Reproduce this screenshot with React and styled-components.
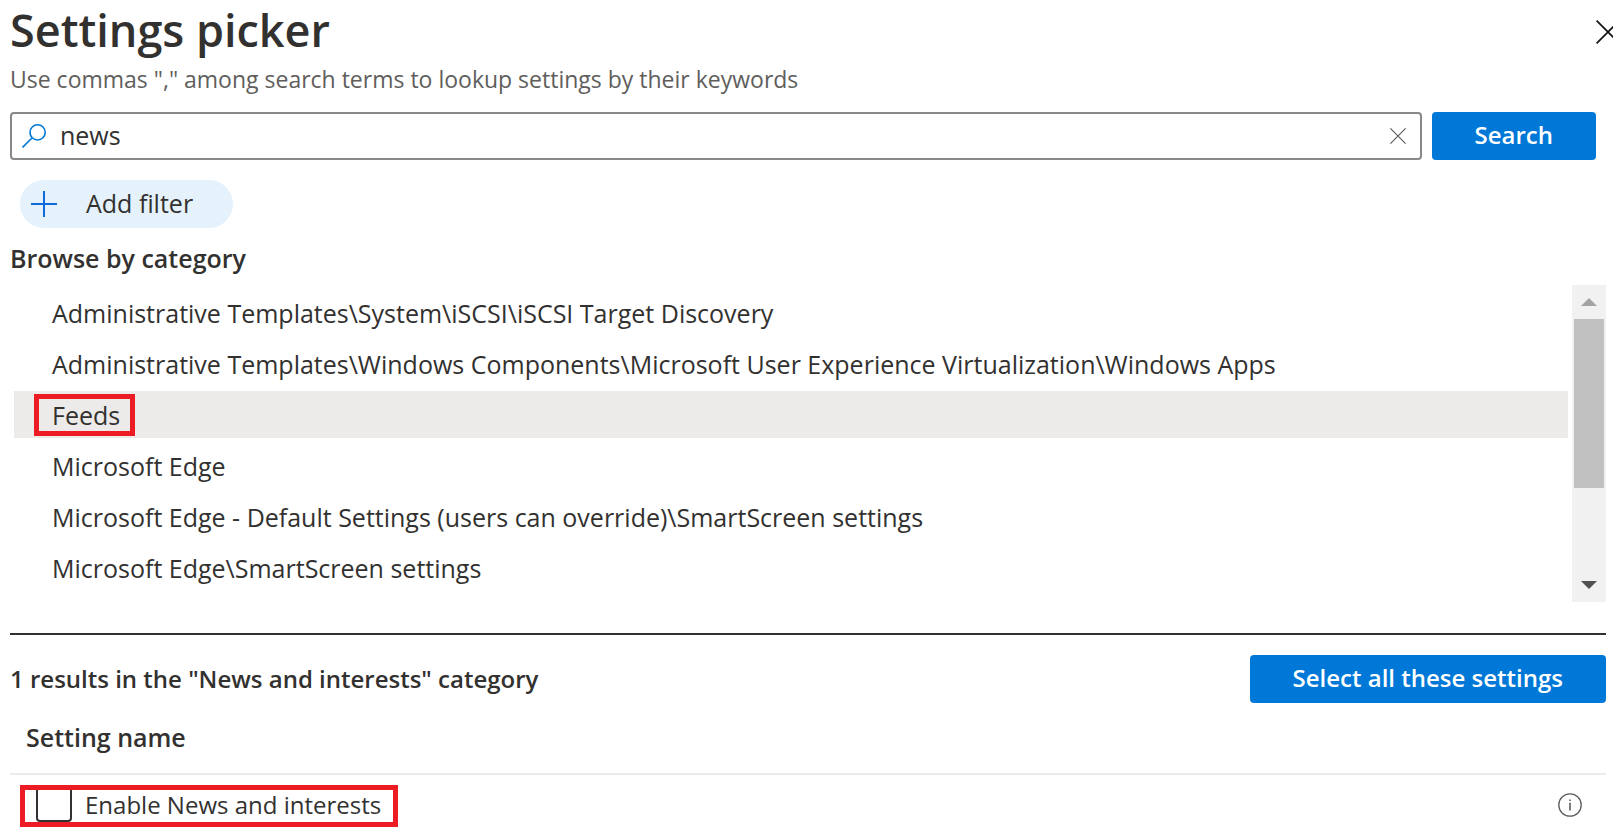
/*
 * Settings picker panel
 * Search box and filter on top, category list in the middle, matching settings below
 */
import React, { useState } from 'react';
import styled, { createGlobalStyle } from 'styled-components';

const categories = [
  'Administrative Templates\\System\\iSCSI\\iSCSI Target Discovery',
  'Administrative Templates\\Windows Components\\Microsoft User Experience Virtualization\\Windows Apps',
  'Feeds',
  'Microsoft Edge',
  'Microsoft Edge - Default Settings (users can override)\\SmartScreen settings',
  'Microsoft Edge\\SmartScreen settings',
];

const App = () => {
  const [query, setQuery] = useState('news');
  const [selected, setSelected] = useState('Feeds');
  const [enabled, setEnabled] = useState(false);

  return (
    <Page>
      <GlobalStyle />
      <Header>
        <Title>Settings picker</Title>
        <IconButton aria-label="Close">
          <svg width="24" height="24" viewBox="0 0 24 24" stroke="#111" strokeWidth="1.7">
            <path d="M0.6 0.6 23.4 23.4M23.4 0.6 0.6 23.4" />
          </svg>
        </IconButton>
      </Header>
      <Hint>Use commas "," among search terms to lookup settings by their keywords</Hint>

      <SearchForm onSubmit={(e) => e.preventDefault()}>
        <SearchBox>
          <svg width="24" height="24" viewBox="0 0 24 24" fill="none" stroke="#0078d4" strokeWidth="1.6">
            <circle cx="15.6" cy="8.4" r="7.6" />
            <path d="M10.2 13.8 0.5 23.5" />
          </svg>
          <SearchInput
            type="text"
            aria-label="Search settings"
            value={query}
            onChange={(e) => setQuery(e.target.value)}
          />
          <IconButton type="button" aria-label="Clear search" onClick={() => setQuery('')}>
            <svg width="16" height="16" viewBox="0 0 16 16" stroke="#605e5c" strokeWidth="1.2">
              <path d="M0.4 0.4 15.6 15.6M15.6 0.4 0.4 15.6" />
            </svg>
          </IconButton>
        </SearchBox>
        <PrimaryButton type="submit">Search</PrimaryButton>
      </SearchForm>

      <FilterButton type="button">
        <svg width="26" height="26" viewBox="0 0 26 26" stroke="#0f6cda" strokeWidth="2">
          <path d="M13 0V26M0 13H26" />
        </svg>
        <FilterText>Add filter</FilterText>
      </FilterButton>

      <SectionTitle>Browse by category</SectionTitle>
      <ListFrame>
        <CategoryList>
          {categories.map((name) => (
            <li key={name}>
              <CategoryButton $active={name === selected} onClick={() => setSelected(name)}>
                <CategoryLabel $marked={name === 'Feeds'}>{name}</CategoryLabel>
              </CategoryButton>
            </li>
          ))}
        </CategoryList>
        <Scrollbar>
          <ScrollArrow aria-label="Scroll up">
            <svg width="16" height="8" viewBox="0 0 16 8" fill="#a3a3a3">
              <path d="M8 0 16 8H0Z" />
            </svg>
          </ScrollArrow>
          <ScrollTrack>
            <ScrollThumb />
          </ScrollTrack>
          <ScrollArrow aria-label="Scroll down">
            <svg width="16" height="8" viewBox="0 0 16 8" fill="#505050">
              <path d="M0 0H16L8 8Z" />
            </svg>
          </ScrollArrow>
        </Scrollbar>
      </ListFrame>

      <Results>
        <ResultsBar>
          <ResultsTitle>1 results in the "News and interests" category</ResultsTitle>
          <PrimaryButton type="button">Select all these settings</PrimaryButton>
        </ResultsBar>
        <SettingsTable>
          <thead>
            <tr>
              <HeadCell colSpan={2}>Setting name</HeadCell>
            </tr>
          </thead>
          <tbody>
            <tr>
              <Cell>
                <SettingLabel>
                  <Checkbox type="checkbox" checked={enabled} onChange={() => setEnabled(!enabled)} />
                  <SettingText>Enable News and interests</SettingText>
                </SettingLabel>
              </Cell>
              <InfoCell>
                <IconButton aria-label="More information">
                  <svg width="24" height="24" viewBox="0 0 24 24" fill="none" stroke="#605e5c" strokeWidth="1.3">
                    <circle cx="12" cy="12" r="11.2" />
                    <path d="M12 9.8V17.6M12 6.4V8" strokeWidth="1.6" />
                  </svg>
                </IconButton>
              </InfoCell>
            </tr>
          </tbody>
        </SettingsTable>
      </Results>
    </Page>
  );
};

const GlobalStyle = createGlobalStyle`
  * {
    box-sizing: border-box;
  }

  body {
    margin: 0;
    background: #ffffff;
    color: #323130;
    font-family: 'Open Sans', 'Noto Sans', sans-serif;
    font-size: 25px;
    line-height: 32px;
  }

  button,
  input {
    font: inherit;
    color: inherit;
  }

  svg {
    display: block;
    flex: none;
  }
`;

const Page = styled.main`
  padding: 0 7px 0 10px;
  overflow: hidden;
`;

const Header = styled.header`
  display: flex;
  justify-content: space-between;
  align-items: center;
  height: 64px;
  margin-right: -14px;
`;

const Title = styled.h1`
  margin: 0;
  padding-bottom: 4px;
  font-size: 45px;
  font-weight: 600;
  line-height: 60px;
`;

const IconButton = styled.button`
  display: flex;
  padding: 0;
  border: none;
  background: none;
  cursor: pointer;
`;

const Hint = styled.p`
  margin: 0 0 18px;
  color: #605e5c;
  font-size: 23px;
  line-height: 30px;
`;

const SearchForm = styled.form`
  display: flex;
  gap: 10px;
  padding-right: 10px;
`;

const SearchBox = styled.div`
  display: flex;
  align-items: center;
  flex: 1;
  gap: 14px;
  height: 48px;
  padding: 0 14px 0 10px;
  border: 2px solid #8a8886;
  border-radius: 4px;
`;

const SearchInput = styled.input`
  flex: 1;
  min-width: 0;
  padding: 0 0 2px;
  border: none;
  outline: none;
  background: none;
`;

const PrimaryButton = styled.button`
  height: 48px;
  padding: 0 43px 2px;
  border: none;
  border-radius: 4px;
  background: #0078d7;
  color: #ffffff;
  font-size: 24px;
  font-weight: 600;
  white-space: nowrap;
  cursor: pointer;
`;

const FilterButton = styled.button`
  display: flex;
  align-items: center;
  gap: 29px;
  height: 48px;
  margin: 20px 0 0 10px;
  padding: 0 40px 0 11px;
  border: none;
  border-radius: 24px;
  background: #e5f1fb;
  cursor: pointer;
`;

const FilterText = styled.span`
  padding-bottom: 2px;
`;

const SectionTitle = styled.h2`
  margin: 14px 0 11px;
  font-size: 25px;
  font-weight: 600;
  line-height: 32px;
`;

const ListFrame = styled.div`
  display: flex;
  gap: 4px;
`;

const CategoryList = styled.ul`
  display: flex;
  flex: 1;
  flex-direction: column;
  gap: 4px;
  margin: 0;
  padding: 4px 0 11px 4px;
  list-style: none;
`;

const CategoryButton = styled.button`
  display: flex;
  align-items: center;
  width: 100%;
  height: 47px;
  padding: 0 20px;
  border: none;
  background: ${props => (props.$active ? '#edebe9' : 'transparent')};
  text-align: left;
  cursor: pointer;
`;

const CategoryLabel = styled.span`
  padding: 0 10px 0 13px;
  border: 5px solid ${props => (props.$marked ? '#ed1c24' : 'transparent')};
`;

const Scrollbar = styled.div`
  display: flex;
  flex-direction: column;
  width: 34px;
  background: #f1f1f1;
`;

const ScrollArrow = styled.button`
  display: flex;
  align-items: center;
  justify-content: center;
  height: 34px;
  padding: 0;
  border: none;
  background: none;
`;

const ScrollTrack = styled.div`
  flex: 1;
  padding: 0 2px;
`;

const ScrollThumb = styled.div`
  height: 68%;
  background: #c1c1c1;
`;

const Results = styled.section`
  margin-top: 31px;
  padding-top: 20px;
  border-top: 2px solid #323130;
`;

const ResultsBar = styled.div`
  display: flex;
  align-items: center;
  justify-content: space-between;
`;

const ResultsTitle = styled.h2`
  margin: 0;
  font-size: 24px;
  font-weight: 600;
`;

const SettingsTable = styled.table`
  width: 100%;
  border-collapse: collapse;
`;

const HeadCell = styled.th`
  padding: 18px 16px 20px;
  border-bottom: 2px solid #edebe9;
  font-weight: 600;
  text-align: left;
`;

const Cell = styled.td`
  padding: 10px 10px 0;
`;

const InfoCell = styled.td`
  width: 48px;
  padding: 8px 0 0;
`;

const SettingLabel = styled.label`
  display: inline-flex;
  align-items: flex-end;
  gap: 13px;
  height: 42px;
  padding: 0 12px 0 11px;
  border: 5px solid #ed1c24;
  font-size: 24px;
  overflow: hidden;
  vertical-align: top;
  cursor: pointer;
`;

const SettingText = styled.span`
  padding-bottom: 1px;
`;

const Checkbox = styled.input`
  appearance: none;
  flex: none;
  width: 36px;
  height: 36px;
  margin: 0;
  border: 2px solid #323130;
  border-radius: 4px;

  &:checked {
    background: #0078d7;
  }
`;

export default App;
